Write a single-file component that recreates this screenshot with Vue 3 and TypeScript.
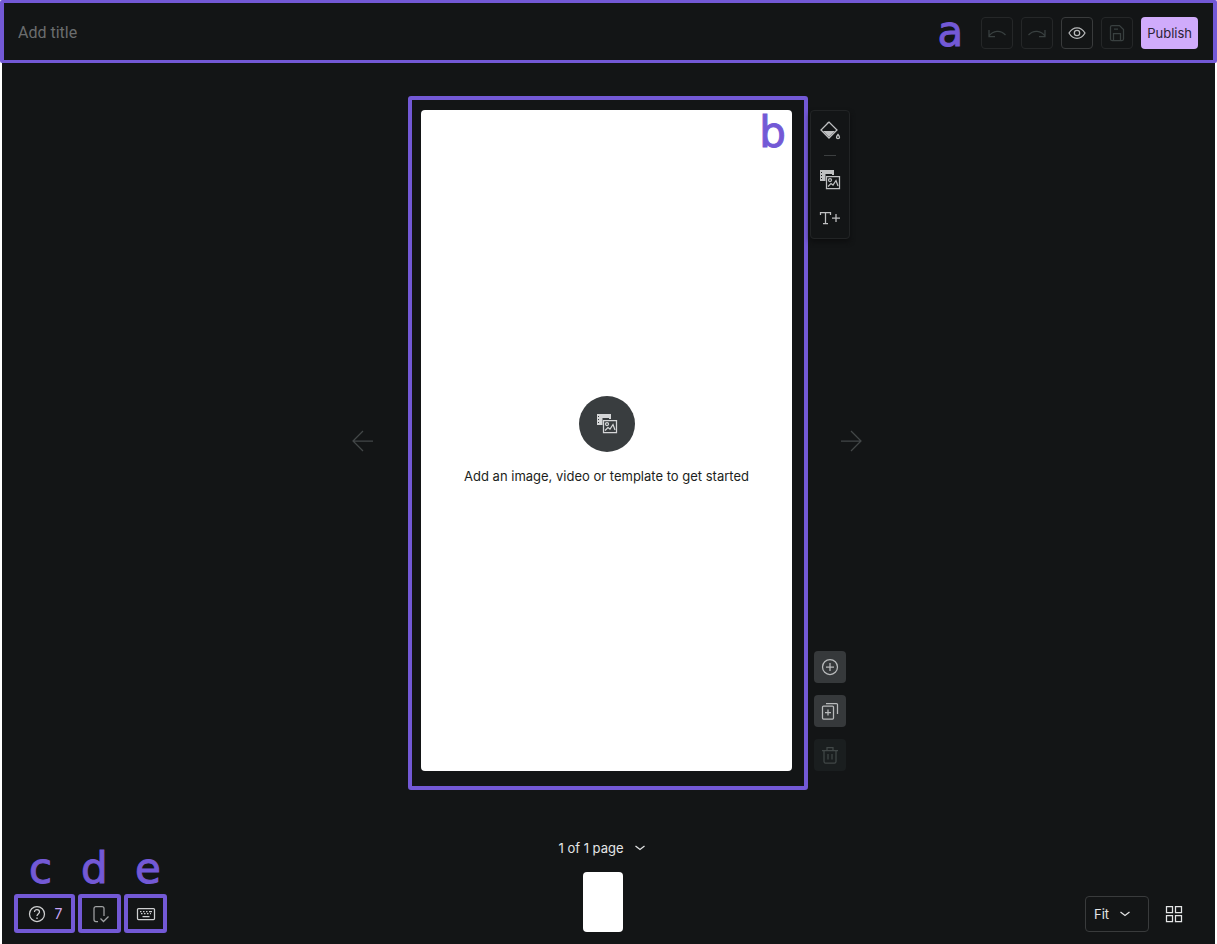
<script setup lang="ts">
import { ref } from 'vue'

const title = ref('')
const zoom = ref('Fit')
const issueCount = 7
</script>

<template>
  <div class="editor">
    <header class="topbar">
      <input v-model="title" class="title" type="text" placeholder="Add title" aria-label="Story title" />
      <span class="mark mark-a">a</span>
      <div class="actions">
        <button class="square" type="button" aria-label="Undo" disabled>
          <svg width="20" height="20" viewBox="0 0 20 20"><path d="M2 7v6.500h6M2 13C6 7.500 13.500 6.500 18.500 12" /></svg>
        </button>
        <button class="square" type="button" aria-label="Redo" disabled>
          <svg width="20" height="20" viewBox="0 0 20 20"><path d="M18 7v6.500h-6M18 13C14 7.500 6.500 6.500 1.500 12" /></svg>
        </button>
        <button class="square active" type="button" aria-label="Preview">
          <svg width="20" height="20" viewBox="0 0 20 20">
            <path d="M2 10c4-7 12-7 16 0-4 7-12 7-16 0Z" /><circle cx="10" cy="10" r="2.700" />
          </svg>
        </button>
        <button class="square" type="button" aria-label="Save draft" disabled>
          <svg width="20" height="20" viewBox="0 0 20 20">
            <path d="M5 2.500h7.500l4 4V16q0 1.500-1.500 1.500H5Q3.500 17.500 3.500 16V4Q3.500 2.500 5 2.500ZM6.500 17v-6.500h7V17M7 6h4" />
          </svg>
        </button>
        <button class="publish" type="button">Publish</button>
      </div>
    </header>

    <main class="stage">
      <div class="side side-left">
        <button class="arrow" type="button" aria-label="Previous page" disabled>
          <svg width="24" height="24" viewBox="0 0 24 24"><path d="M22 12H2.500M12 2 2 12l10 10" /></svg>
        </button>
      </div>

      <section class="canvas-frame" aria-label="Canvas">
        <div class="page">
          <span class="mark mark-b">b</span>
          <button class="media-button" type="button" aria-label="Add media">
            <svg width="24" height="24" viewBox="0 0 24 24">
              <path class="solid" d="M2 2h14v5h-2V6H7.500v7H2ZM3 4v1h1V4ZM3 7v1h1V7ZM3 10v1h1v-1Z" fill-rule="evenodd" />
              <path d="M8.500 8.500h13v12h-13Z" /><circle cx="12" cy="12" r="1.500" />
              <path d="m10 18.500 3-3 2 1.500 3-4.500 2 5.500" />
            </svg>
          </button>
          <p class="hint">Add an image, video or template to get started</p>
        </div>
      </section>

      <div class="side side-right">
        <div class="toolbar" role="toolbar" aria-label="Insert">
          <button class="tool" type="button" aria-label="Background">
            <svg width="24" height="24" viewBox="0 0 24 24">
              <path d="M9 4.500 11 3l8 8-8 8-8-8 7.500-7.500" />
              <path class="solid" d="M5 12h12l-6 6Z" />
              <path d="M20 15.500c-2 2.500-2 4 0 4s2-1.500 0-4Z" />
            </svg>
          </button>
          <span class="divider"></span>
          <button class="tool tool-media" type="button" aria-label="Media">
            <svg width="24" height="24" viewBox="0 0 24 24">
              <path class="solid" d="M2 2h14v5h-2V6H7.500v7H2ZM3 4v1h1V4ZM3 7v1h1V7ZM3 10v1h1v-1Z" fill-rule="evenodd" />
              <path d="M8.500 8.500h13v12h-13Z" /><circle cx="12" cy="12" r="1.500" />
              <path d="m10 18.500 3-3 2 1.500 3-4.500 2 5.500" />
            </svg>
          </button>
          <button class="tool" type="button" aria-label="Text">
            <svg width="24" height="24" viewBox="0 0 24 24">
              <path d="M2.500 9V6.500h10V9M7.500 6.500v11M5 17.500h5M14 12h8M18 8v8" />
            </svg>
          </button>
        </div>
        <button class="arrow" type="button" aria-label="Next page" disabled>
          <svg width="24" height="24" viewBox="0 0 24 24"><path d="M2 12h19.500M12 2l10 10-10 10" /></svg>
        </button>
        <div class="page-actions">
          <button class="page-action" type="button" aria-label="Add page">
            <svg width="20" height="20" viewBox="0 0 20 20"><circle cx="10" cy="10" r="7.500" /><path d="M10 6v8M6 10h8" /></svg>
          </button>
          <button class="page-action" type="button" aria-label="Duplicate page">
            <svg width="20" height="20" viewBox="0 0 20 20">
              <rect x="2.500" y="5" width="11" height="13" rx="1" /><path d="M6 2.500h10.500a1 1 0 0 1 1 1V13M8 8.500v6M5 11.500h6" />
            </svg>
          </button>
          <button class="page-action" type="button" aria-label="Delete page" disabled>
            <svg width="20" height="20" viewBox="0 0 20 20">
              <path d="M2 5.500h16M7 5V2.500h6V5M4 6v10.500q0 1.500 1.500 1.500h9q1.500 0 1.500-1.500V6M8 9v5.500M12 9v5.500" />
            </svg>
          </button>
        </div>
      </div>
    </main>

    <footer class="bottombar">
      <div class="helpers">
        <div class="helper">
          <span class="mark mark-c">c</span>
          <button class="framed framed-wide" type="button" aria-label="Help center">
            <svg width="20" height="20" viewBox="0 0 20 20">
              <circle cx="10" cy="10" r="7.500" /><path d="M7.500 8C7.500 4.500 12.500 5 12.500 8c0 1.500-2.500 2-2.500 4M10 13.500V15" />
            </svg>
            <span class="count">{{ issueCount }}</span>
          </button>
        </div>
        <div class="helper">
          <span class="mark mark-d">d</span>
          <button class="framed" type="button" aria-label="Checklist">
            <svg class="dim" width="20" height="20" viewBox="0 0 20 20">
              <path d="M8 17.500H6a2 2 0 0 1-2-2v-11a2 2 0 0 1 2-2h6a2 2 0 0 1 2 2V12M10.500 14.500l3 3 5-5" />
            </svg>
          </button>
        </div>
        <div class="helper">
          <span class="mark mark-e">e</span>
          <button class="framed" type="button" aria-label="Keyboard shortcuts">
            <svg width="20" height="20" viewBox="0 0 20 20">
              <rect x="1.500" y="4.500" width="17" height="11" rx="1" />
              <path d="M4 7.500h1.500M7 7.500h1.500M10 7.500h1.500M13 7.500h3M5 9.500h1.500M8 9.500h1.500M11 9.500h1.500M14 9.500h1M6.500 12.500h7" />
            </svg>
          </button>
        </div>
      </div>

      <div class="pages">
        <button class="page-toggle" type="button">
          1 of 1 page
          <svg width="10" height="10" viewBox="0 0 10 10"><path d="M.500 3 5 6.500 9.500 3" /></svg>
        </button>
        <button class="thumb" type="button" aria-label="Page 1"></button>
      </div>

      <div class="view">
        <div class="zoom">
          <select v-model="zoom" aria-label="Zoom level">
            <option>Fit</option>
            <option>Fill</option>
            <option>100%</option>
          </select>
          <svg width="10" height="10" viewBox="0 0 10 10"><path d="M.500 3 5 6.500 9.500 3" /></svg>
        </div>
        <button class="grid-button" type="button" aria-label="Grid view">
          <svg width="18" height="18" viewBox="0 0 18 18">
            <path d="M1.500 1.500h6v6h-6ZM10.500 1.500h6v6h-6ZM1.500 10.500h6v6h-6ZM10.500 10.500h6v6h-6Z" />
          </svg>
        </button>
      </div>
    </footer>
  </div>
</template>

<style>
body {
  margin: 0;
  background: #131516;
}
</style>

<style scoped>
.editor {
  --ink: #131516;
  --violet: #7359d6;
  box-sizing: border-box;
  min-height: 100vh;
  display: flex;
  flex-direction: column;
  border: solid #fff;
  border-width: 0 2px;
  background: var(--ink);
  color: #e4e5e6;
  font: 14px/20px Inter, "Open Sans", sans-serif;
}
button,
input,
select {
  box-sizing: border-box;
  margin: 0;
  padding: 0;
  border: 0;
  background: none;
  color: inherit;
  font: inherit;
}
button {
  display: flex;
  align-items: center;
  justify-content: center;
}
svg {
  flex: none;
  fill: none;
  stroke: currentColor;
  stroke-width: 1.25;
}
.solid {
  fill: currentColor;
  stroke: none;
}
.mark {
  color: var(--violet);
  font: 42px/42px "DejaVu Sans", sans-serif;
  -webkit-text-stroke: 1px var(--violet);
}
.topbar {
  box-sizing: border-box;
  height: 63px;
  margin: 0 -2px;
  padding: 0 15px 0 14px;
  display: flex;
  align-items: center;
  border: solid var(--violet);
  border-width: 3px 4px;
  border-radius: 2px;
  background: var(--ink);
}
.title {
  flex: 1;
  min-width: 0;
  height: 32px;
  padding-top: 2px;
  font: 16px/24px Roboto, sans-serif;
}
.title::placeholder {
  color: #6b6d6e;
  opacity: 1;
}
.mark-a {
  margin-right: 18px;
}
.actions {
  display: flex;
  gap: 8px;
  padding-top: 3px;
}
.square {
  width: 32px;
  height: 32px;
  border: 1px solid #252728;
  border-radius: 4px;
  color: #394040;
}
.square.active {
  border-color: #393b3c;
  color: #b9bbbc;
}
.publish {
  height: 32px;
  padding: 0 6px;
  border-radius: 4px;
  background: #d0abfb;
  color: #2a2235;
  font-size: 13px;
}
.stage {
  margin-right: 1px;
  padding-top: 33px;
  display: grid;
  grid-template-columns: 1fr auto 1fr;
}
.canvas-frame {
  padding: 10px 12px 15px 9px;
  border: 4px solid var(--violet);
  border-radius: 3px;
}
.page {
  position: relative;
  height: calc(100vh - 283px);
  min-height: 480px;
  aspect-ratio: 371 / 661;
  display: flex;
  flex-direction: column;
  align-items: center;
  justify-content: center;
  gap: 14px;
  border-radius: 4px;
  background: #fff;
}
.mark-b {
  position: absolute;
  top: 2px;
  right: 6px;
}
.media-button {
  width: 56px;
  height: 56px;
  border-radius: 50%;
  background: #393d3f;
  color: #d5d6d7;
}
.hint {
  margin: 0;
  color: #1c1e20;
  font-size: 13px;
}
.side {
  margin: 14px 0 19px;
  display: grid;
  grid-template-rows: 1fr auto 1fr;
}
.side-left {
  justify-items: end;
  padding-right: 29px;
}
.side-left .arrow {
  grid-row: 2;
}
.side-right {
  justify-items: start;
}
.arrow {
  width: 32px;
  height: 32px;
  color: #434748;
}
.side-right .arrow {
  margin-left: 27px;
}
.toolbar {
  box-sizing: border-box;
  align-self: start;
  width: 40px;
  margin-left: 2px;
  padding: 4px 0;
  display: flex;
  flex-direction: column;
  align-items: center;
  border: 1px solid #222425;
  border-radius: 4px;
  box-shadow: 0 3px 5px #0d0e0f;
  color: #bfc0c1;
}
.tool {
  width: 32px;
  height: 32px;
}
.divider {
  width: 12px;
  height: 1px;
  margin: 8px 0;
  background: #3c3f40;
}
.tool-media {
  margin-bottom: 6px;
}
.page-actions {
  align-self: end;
  margin-left: 6px;
  display: grid;
  gap: 12px;
}
.page-action {
  width: 32px;
  height: 32px;
  border-radius: 4px;
  background: #36393b;
  color: #b9bbbc;
}
.page-action:disabled {
  background: #1a1e1f;
  color: #414747;
}
.bottombar {
  flex: 1;
  padding: 8px 23px 11px 12px;
  display: grid;
  grid-template-columns: 1fr auto 1fr;
  align-items: end;
}
.helpers {
  display: flex;
  gap: 3px;
}
.helper {
  display: grid;
  gap: 4px;
}
.mark-c {
  padding-left: 15px;
}
.mark-d {
  padding-left: 3px;
}
.mark-e {
  padding-left: 11px;
}
.framed {
  width: 43px;
  height: 39px;
  border: 4px solid var(--violet);
  border-radius: 3px;
  color: #cfd0d1;
}
.framed-wide {
  width: 61px;
  gap: 8px;
}
.count {
  color: #c9a6f5;
}
.dim {
  color: #a0a2a3;
}
.pages,
.view {
  margin-bottom: 1px;
}
.pages {
  display: grid;
  justify-items: center;
  gap: 12px;
}
.page-toggle {
  height: 24px;
  padding-right: 3px;
  gap: 11px;
  font-size: 13px;
}
.thumb {
  width: 40px;
  height: 60px;
  border-radius: 4px;
  background: #fff;
}
.view {
  display: flex;
  justify-content: flex-end;
  gap: 7px;
}
.zoom {
  position: relative;
  display: flex;
  align-items: center;
}
.zoom select {
  width: 64px;
  height: 36px;
  padding-left: 8px;
  appearance: none;
  border: 1px solid #393b3c;
  border-radius: 4px;
  background: var(--ink);
  font-size: 13px;
}
.zoom svg {
  position: absolute;
  right: 19px;
  pointer-events: none;
}
.grid-button {
  width: 36px;
  height: 36px;
}
</style>
